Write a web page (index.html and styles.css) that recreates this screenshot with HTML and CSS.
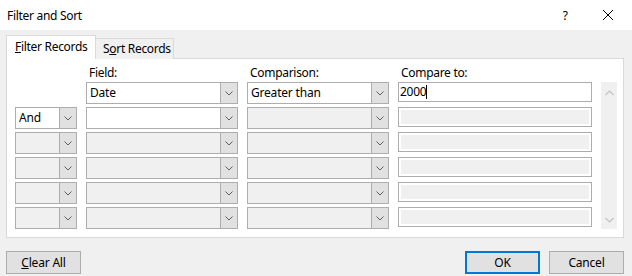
FILE: index.html
```html
<!DOCTYPE html>
<html>
<head>
<meta charset="utf-8">
<link rel="stylesheet" href="styles.css">
</head>
<body>
<div class="dialog">
  <header class="titlebar">
    <span class="title">Filter and Sort</span>
    <div class="controls">
      <span class="help">?</span>
      <svg class="close" width="12" height="12" viewBox="0 0 12 12"><path d="M1 1 L11 11 M11 1 L1 11" stroke="#000" stroke-width="1" fill="none"/></svg>
    </div>
  </header>
  <div class="content">
    <div class="tabs">
      <div class="tab active"><u>F</u>ilter Records</div>
      <div class="tab">S<u>o</u>rt Records</div>
    </div>
    <div class="panel">
      <div class="grid">
        <div class="label"></div>
        <div class="label">Field:</div>
        <div class="label">Comparison:</div>
        <div class="label">Compare to:</div>
        <div class="label"></div>
        <div class="scroll">
          <svg width="9" height="6" viewBox="0 0 9 6"><path d="M0.5 5 L4.5 1 L8.5 5" stroke="#c2c2c2" stroke-width="1.2" fill="none"/></svg>
          <svg width="9" height="6" viewBox="0 0 9 6"><path d="M0.5 1 L4.5 5 L8.5 1" stroke="#c2c2c2" stroke-width="1.2" fill="none"/></svg>
        </div>

        <div></div>
        <div class="combo on"><span class="val">Date</span><span class="btn"></span></div>
        <div class="combo on"><span class="val">Greater than</span><span class="btn"></span></div>
        <div class="text on"><span class="val">2000</span><span class="caret"></span></div>

        <div class="combo on"><span class="val">And</span><span class="btn"></span></div>
        <div class="combo on"><span class="val"></span><span class="btn"></span></div>
        <div class="combo"><span class="val"></span><span class="btn"></span></div>
        <div class="text"></div>

        <div class="combo"><span class="val"></span><span class="btn"></span></div>
        <div class="combo"><span class="val"></span><span class="btn"></span></div>
        <div class="combo"><span class="val"></span><span class="btn"></span></div>
        <div class="text"></div>

        <div class="combo"><span class="val"></span><span class="btn"></span></div>
        <div class="combo"><span class="val"></span><span class="btn"></span></div>
        <div class="combo"><span class="val"></span><span class="btn"></span></div>
        <div class="text"></div>

        <div class="combo"><span class="val"></span><span class="btn"></span></div>
        <div class="combo"><span class="val"></span><span class="btn"></span></div>
        <div class="combo"><span class="val"></span><span class="btn"></span></div>
        <div class="text"></div>

        <div class="combo"><span class="val"></span><span class="btn"></span></div>
        <div class="combo"><span class="val"></span><span class="btn"></span></div>
        <div class="combo"><span class="val"></span><span class="btn"></span></div>
        <div class="text"></div>
      </div>
    </div>
    <div class="footer">
      <button class="button"><u>C</u>lear All</button>
      <div class="right">
        <button class="button default">OK</button>
        <button class="button">Cancel</button>
      </div>
    </div>
  </div>
</div>
</body>
</html>
```

FILE: styles.css
```css
* { box-sizing: border-box; }
html, body { margin: 0; padding: 0; }
body {
  background: #f0f0f0;
  font-family: "Noto Sans", "Open Sans", sans-serif;
  font-size: 12px;
  color: #000;
  width: 632px;
  height: 276px;
  overflow: hidden;
}
.dialog { width: 632px; height: 276px; }
.titlebar {
  height: 30px;
  background: #fff;
  display: flex;
  align-items: center;
  justify-content: space-between;
  padding-left: 7px;
}
.title { font-size: 12px; letter-spacing: -0.3px; }
.controls { display: flex; align-items: center; height: 100%; }
.help { font-size: 12px; margin-right: 34px; }
.close { margin-right: 18px; }

.content { padding: 5px 8px 0 6px; }
.tabs { display: flex; align-items: flex-end; height: 24px; position: relative; z-index: 1; }
.tab {
  border: 1px solid #d9d9d9;
  border-bottom: none;
  background: #f0f0f0;
  height: 21px;
  padding: 0 0 0 8px;
  line-height: 20px;
  letter-spacing: -0.3px;
}
.tab.active {
  background: #fff;
  height: 24px;
  width: 90px;
  line-height: 22px;
  padding-left: 8px;
}
.tab:not(.active) { width: 78px; border-left: none; padding-left: 7px; }
.panel {
  background: #fff;
  border: 1px solid #d9d9d9;
  margin-top: -1px;
  height: 180px;
  padding: 2px 0 0 8px;
}
.grid {
  display: grid;
  grid-template-columns: 62px 152px 142px 194px 16px;
  grid-template-rows: 18px repeat(6, 22px);
  column-gap: 9px;
  row-gap: 3px;
}
.label { align-self: end; line-height: 16px; margin-bottom: -2px; padding-left: 3px; letter-spacing: -0.3px; }
.scroll {
  grid-column: 5;
  grid-row: 2 / 8;
  background: #f0f0f0;
  display: flex;
  flex-direction: column;
  justify-content: space-between;
  align-items: center;
  padding: 8px 0 6px;
}
.combo {
  display: flex;
  border: 1px solid #adadad;
  background: #f0f0f0;
  height: 22px;
}
.combo.on { background: #fff; }
.val { flex: 1; padding-left: 3px; line-height: 20px; letter-spacing: -0.2px; }
.btn {
  width: 17px;
  border-left: 1px solid #adadad;
  background: #e1e1e1 url("data:image/svg+xml;utf8,<svg xmlns='http://www.w3.org/2000/svg' width='8' height='5' viewBox='0 0 8 5'><path d='M0.5 0.5 L4 4 L7.5 0.5' stroke='%23606060' stroke-width='1' fill='none'/></svg>") no-repeat center;
}
.text {
  height: 20px;
  border: 1px solid #adadad;
  background: #f0f0f0;
  box-shadow: inset 0 0 0 2px #fff;
}
.text.on {
  background: #fff;
  box-shadow: none;
  display: flex;
  align-items: center;
  padding-left: 1px;
}
.text.on .val { flex: none; padding-left: 0; line-height: 16px; letter-spacing: -0.3px; }
.caret { width: 1px; height: 14px; background: #000; }

.footer {
  display: flex;
  justify-content: space-between;
  margin-top: 13px;
}
.right { display: flex; gap: 9px; }
.button {
  width: 75px;
  height: 23px;
  border: 1px solid #adadad;
  background: #e1e1e1;
  font-family: "Noto Sans", "Open Sans", sans-serif;
  font-size: 12px;
  color: #000;
  padding: 0;
  letter-spacing: -0.2px;
}
.button.default { border: 2px solid #0078d7; }
```
